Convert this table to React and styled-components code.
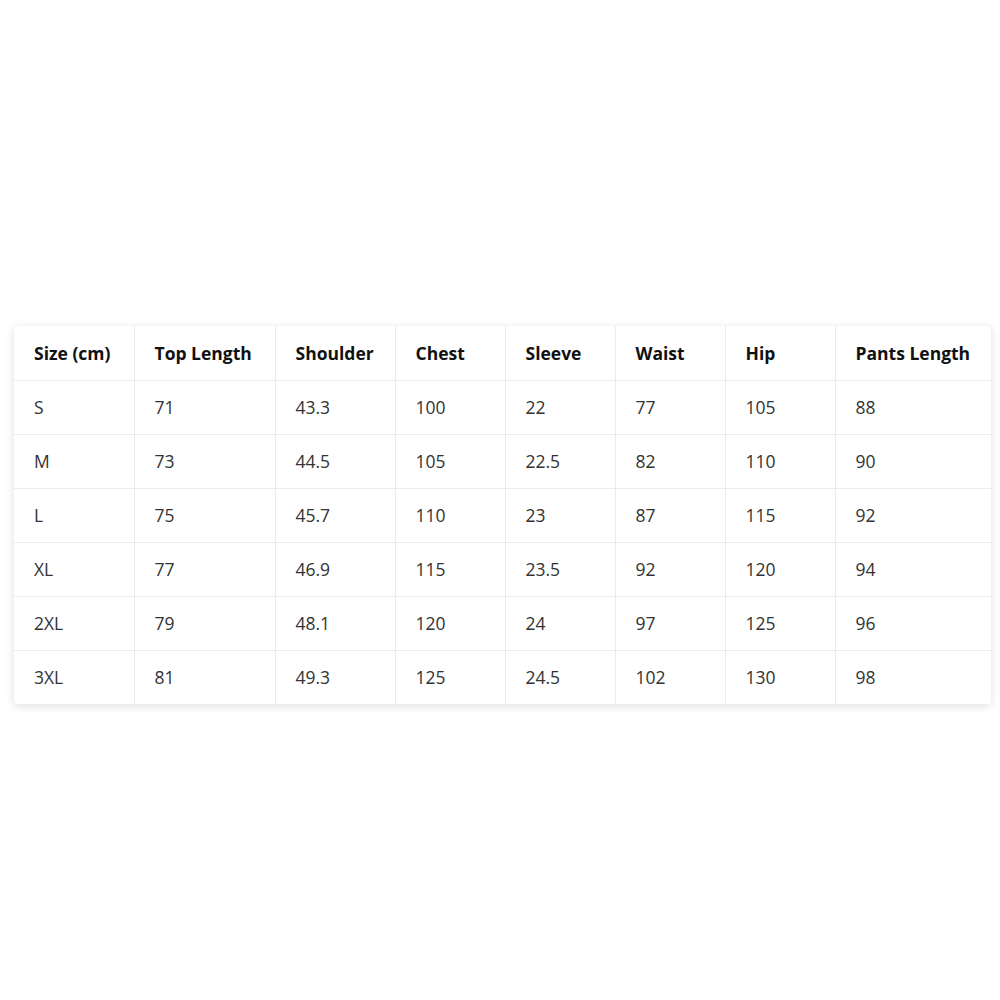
import React from "react";
import styled, { createGlobalStyle } from "styled-components";

const Global = createGlobalStyle`
  html, body { margin: 0; padding: 0; background: #fff; }
  body { font-family: "Open Sans", "Noto Sans", Arial, sans-serif; }
`;

const Page = styled.div`
  width: 1000px;
  height: 1000px;
  box-sizing: border-box;
  padding: 326px 9px 0 14px;
`;

const Card = styled.div`
  width: 977px;
  background: #fff;
  border-radius: 4px;
  box-shadow: 0 2px 10px rgba(0, 0, 0, 0.13);
  overflow: hidden;
`;

const Table = styled.table`
  width: 100%;
  border-collapse: collapse;
  table-layout: fixed;
`;

const Cell = styled.td`
  height: 54px;
  padding: 0 0 0 20px;
  box-sizing: border-box;
  font-size: 17.5px;
  color: #333;
  text-align: left;
  white-space: nowrap;
  border-right: 1px solid #ebebeb;
  border-bottom: 1px solid #ebebeb;
  &:last-child { border-right: none; }
  tbody tr:last-child > & { border-bottom: none; }
`;

const Head = styled(Cell).attrs({ as: "th" })`
  font-weight: 700;
  color: #111;
`;

const widths = [120, 141, 120, 110, 110, 110, 110, 156];
const headers = ["Size (cm)", "Top Length", "Shoulder", "Chest", "Sleeve", "Waist", "Hip", "Pants Length"];
const rows = [
  ["S", "71", "43.3", "100", "22", "77", "105", "88"],
  ["M", "73", "44.5", "105", "22.5", "82", "110", "90"],
  ["L", "75", "45.7", "110", "23", "87", "115", "92"],
  ["XL", "77", "46.9", "115", "23.5", "92", "120", "94"],
  ["2XL", "79", "48.1", "120", "24", "97", "125", "96"],
  ["3XL", "81", "49.3", "125", "24.5", "102", "130", "98"],
];

export default function App() {
  return (
    <Page>
      <Global />
      <Card>
        <Table>
          <colgroup>
            {widths.map((w, i) => (
              <col key={i} style={{ width: w }} />
            ))}
          </colgroup>
          <thead>
            <tr>
              {headers.map((h) => (
                <Head key={h}>{h}</Head>
              ))}
            </tr>
          </thead>
          <tbody>
            {rows.map((r) => (
              <tr key={r[0]}>
                {r.map((c, i) => (
                  <Cell key={i}>{c}</Cell>
                ))}
              </tr>
            ))}
          </tbody>
        </Table>
      </Card>
    </Page>
  );
}
